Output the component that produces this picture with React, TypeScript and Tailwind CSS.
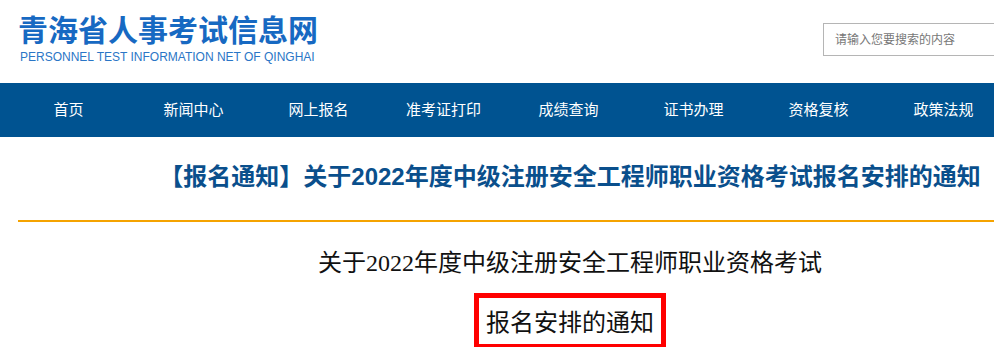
const navItems = ['首页', '新闻中心', '网上报名', '准考证打印', '成绩查询', '证书办理', '资格复核', '政策法规'];

export default function App() {
  return (
    <div className="w-[994px] h-[347px] overflow-hidden bg-white font-['Liberation_Sans','Noto_Sans_CJK_SC',sans-serif]">
      {/* Header */}
      <header className="h-[83px] flex items-start justify-between">
        <div className="pl-[18px] pt-[14px] flex flex-col">
          <span className="text-[30px] leading-[34px] font-bold text-[#1769c2]">青海省人事考试信息网</span>
          <span className="text-[12px] leading-[13px] text-[#2a76c6] mt-[3px] pl-[2px] whitespace-nowrap">PERSONNEL TEST INFORMATION NET OF QINGHAI</span>
        </div>
        <div className="mt-[23px] w-[180px] h-[33px] border border-[#b5b5b5] flex items-center pl-[11px] -mr-[9px]">
          <span className="text-[12px] text-[#777777]">请输入您要搜索的内容</span>
        </div>
      </header>

      {/* Nav */}
      <nav className="h-[54px] bg-[#005391] pl-[6px] grid grid-cols-[repeat(8,125px)]">
        {navItems.map((item) => (
          <div key={item} className="flex items-center justify-center text-white text-[15px] whitespace-nowrap">
            {item}
          </div>
        ))}
      </nav>

      {/* Content */}
      <div className="pl-[18px]">
        <div className="w-[1104px]">
          <h1 className="pt-[25px] pb-[28px] text-center text-[24px] leading-[30px] font-bold text-[#0a4f8c] border-b-2 border-[#f5a300]">
            【报名通知】关于2022年度中级注册安全工程师职业资格考试报名安排的通知
          </h1>
          <div className="flex flex-col items-center font-['Liberation_Serif','Noto_Sans_CJK_SC',serif] text-[#111111] text-[24px]">
            <p className="mt-[27px] leading-[28px]">关于2022年度中级注册安全工程师职业资格考试</p>
            <div className="mt-[16px] border-[5px] border-[#ff0000] px-[7px] pt-[11px] pb-[7px]">
              <p className="leading-[28px]">报名安排的通知</p>
            </div>
          </div>
        </div>
      </div>
    </div>
  );
}
